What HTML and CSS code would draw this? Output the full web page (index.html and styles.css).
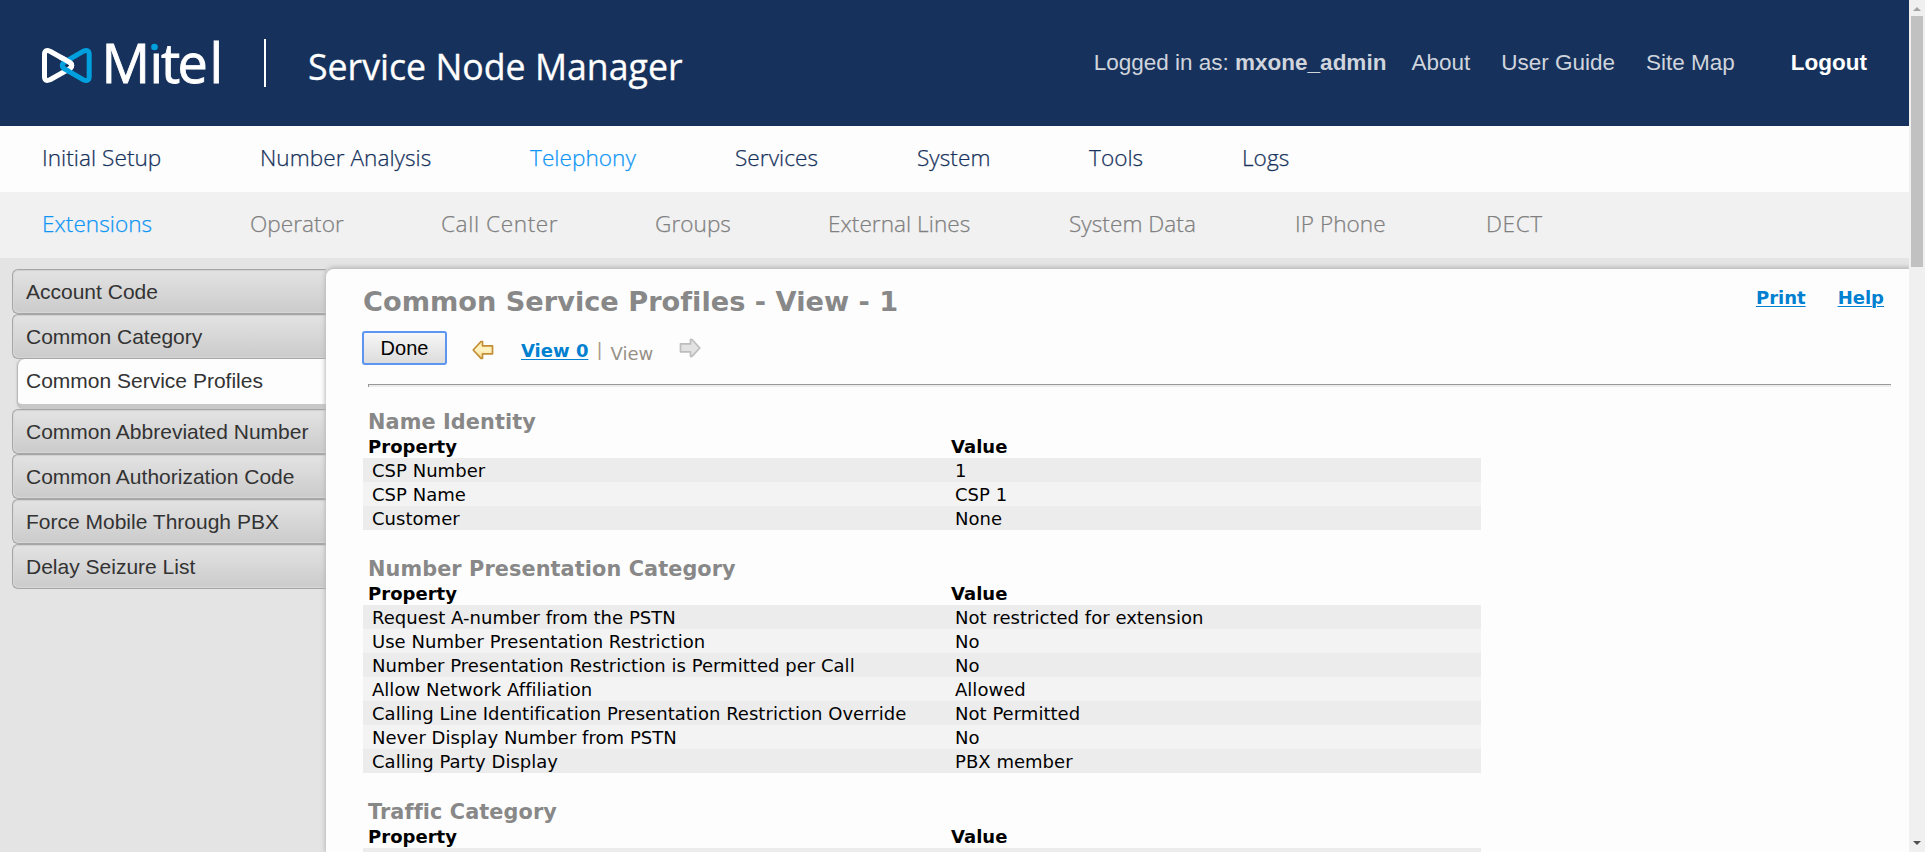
FILE: index.html
```html
<!DOCTYPE html>
<html lang="en">
<head>
<meta charset="utf-8">
<title>Service Node Manager</title>
<link rel="stylesheet" href="styles.css">
</head>
<body>
<div class="app">
  <div class="page">
    <header class="header">
      <svg class="logo" width="182" height="86" viewBox="0 -20 182 86" role="img" aria-label="Mitel">
        <g fill="none" stroke-width="5" stroke-linejoin="round">
          <path d="M2.500 14.500Q2.500 9 8 11.200L28 22.500Q31.500 25.500 28 28.500L8 39.800Q2.500 42 2.500 36.500Z" stroke="#fff"/>
          <path d="M47.200 14.500Q47.200 9 41.500 11.200L22 22.500Q18.500 25.500 22 28.500L41.500 39.800Q47.200 42 47.200 36.500Z" stroke="#00a0df"/>
          <path d="M18 16.900L28 22.500Q31.500 25.500 28 28.500" stroke="#fff"/>
        </g>
        <text class="logo-text" x="59.500 107.500 119 135.500 167.500" y="42.700">Mitel</text>
        <rect x="105" y="0" width="13" height="12" fill="#16325c"/>
        <circle cx="112.500" cy="7" r="3.300" fill="#00a0df"/>
      </svg>
      <span class="divider"></span>
      <h1 class="product">Service Node Manager</h1>
      <div class="account">
        <span class="user">Logged in as: <b>mxone_admin</b></span>
        <a>About</a><a>User Guide</a><a>Site Map</a><a class="logout">Logout</a>
      </div>
    </header>
    <nav class="nav main-nav">
      <a>Initial Setup</a><a>Number Analysis</a><a class="current">Telephony</a><a>Services</a><a>System</a><a>Tools</a><a>Logs</a>
    </nav>
    <nav class="nav sub-nav">
      <a class="current">Extensions</a><a>Operator</a><a class="wide">Call Center</a><a>Groups</a><a>External Lines</a><a>System Data</a><a>IP Phone</a><a class="wide">DECT</a>
    </nav>
    <div class="body">
      <aside class="side">
        <a class="tab">Account Code</a>
        <a class="tab">Common Category</a>
        <a class="tab active">Common Service Profiles</a>
        <a class="tab">Common Abbreviated Number</a>
        <a class="tab">Common Authorization Code</a>
        <a class="tab">Force Mobile Through PBX</a>
        <a class="tab">Delay Seizure List</a>
      </aside>
      <main class="panel">
        <div class="titlebar">
          <h2>Common Service Profiles - View - 1</h2>
          <div class="links"><a class="link">Print</a><a class="link">Help</a></div>
        </div>
        <div class="toolbar">
          <button class="done">Done</button>
          <svg class="prev" width="22" height="20" viewBox="0 0 22 20">
            <defs><linearGradient id="gold" x1="0" y1="0" x2="0" y2="1"><stop offset="0" stop-color="#ffe9a8"/><stop offset=".5" stop-color="#fff3c4"/><stop offset="1" stop-color="#fbd98a"/></linearGradient></defs>
            <path d="M1.200 10L9 1.500H10.500V5.800H20.500V13.800H10.500V18.300H9Z" fill="url(#gold)" stroke="#c18e35" stroke-width="1.700" stroke-linejoin="round"/>
          </svg>
          <a class="link view0">View 0</a>
          <span class="pipe">|</span>
          <span class="view">View</span>
          <svg class="next" width="22" height="20" viewBox="0 0 22 20">
            <path d="M20.800 10L13 1.500H11.500V5.800H1.500V13.800H11.500V18.300H13Z" fill="#e2e2e2" stroke="#bdbdbd" stroke-width="1.700" stroke-linejoin="round"/>
          </svg>
        </div>
        <div class="rule"></div>
        <section class="group">
          <h3>Name Identity</h3>
          <div class="row head"><span>Property</span><span>Value</span></div>
          <div class="row"><span>CSP Number</span><span>1</span></div>
          <div class="row"><span>CSP Name</span><span>CSP 1</span></div>
          <div class="row"><span>Customer</span><span>None</span></div>
        </section>
        <section class="group">
          <h3>Number Presentation Category</h3>
          <div class="row head"><span>Property</span><span>Value</span></div>
          <div class="row"><span>Request A-number from the PSTN</span><span>Not restricted for extension</span></div>
          <div class="row"><span>Use Number Presentation Restriction</span><span>No</span></div>
          <div class="row"><span>Number Presentation Restriction is Permitted per Call</span><span>No</span></div>
          <div class="row"><span>Allow Network Affiliation</span><span>Allowed</span></div>
          <div class="row"><span>Calling Line Identification Presentation Restriction Override</span><span>Not Permitted</span></div>
          <div class="row"><span>Never Display Number from PSTN</span><span>No</span></div>
          <div class="row"><span>Calling Party Display</span><span>PBX member</span></div>
        </section>
        <section class="group">
          <h3>Traffic Category</h3>
          <div class="row head"><span>Property</span><span>Value</span></div>
          <div class="row"></div>
        </section>
      </main>
    </div>
  </div>
  <div class="scrollbar">
    <svg width="16" height="16" viewBox="0 0 16 16"><path d="M4 11L8 7L12 11Z" fill="#a3a3a3"/></svg>
    <div class="thumb"></div>
    <svg class="down" width="16" height="16" viewBox="0 0 16 16"><path d="M4 5L8 9L12 5Z" fill="#505050"/></svg>
  </div>
</div>
</body>
</html>
```
FILE: styles.css
```css
* { box-sizing: border-box; }
body { margin: 0; background: #e4e4e4; overflow: hidden; }
.app { display: flex; height: 852px; overflow: hidden; }
.page { width: 1909px; height: 852px; display: flex; flex-direction: column; overflow: hidden; }

.header {
  flex: none; height: 126px; background: #16325c; display: flex; align-items: flex-start;
  padding-left: 42px; font-family: "Liberation Sans", Arial, sans-serif;
}
.logo { margin-top: 20px; flex: none; }
.logo-text { font-family: "Open Sans", sans-serif; font-size: 54px; font-weight: 400; fill: #fff; stroke: #fff; stroke-width: .8px; }
.divider { width: 2px; height: 48px; margin: 39px 0 0 40px; background: #fff; flex: none; }
.product {
  margin: 42px 0 0 42px; color: #fff; white-space: nowrap;
  font: 400 35.700px/48px "Open Sans", sans-serif; -webkit-text-stroke: .3px #fff;
}
.account { margin: 48px 42px 0 auto; display: flex; font-size: 22.500px; line-height: 30px; color: #d0d4dc; white-space: nowrap; }
.user { margin-right: 25px; }
.account a { margin-right: 31px; }
.account .logout { margin: 0 0 0 25px; color: #fff; font-weight: 700; }

.nav { flex: none; height: 66px; display: grid; padding-left: 42px; font: 300 22.600px/64px "Open Sans", sans-serif; letter-spacing: .04px; -webkit-text-stroke: .25px currentColor; white-space: nowrap; }
.main-nav { background: #fdfdfd; color: #16325c; grid-template-columns: 218px 270px 205px 182px 172px 153px 100px; }
.sub-nav { background: #f1f1f1; color: #808080; grid-template-columns: 208px 191px 214px 173px 241px 226px 191px 100px; }
.nav .current { color: #0f96f5; }
.nav .wide { letter-spacing: .6px; }

.body { flex: 1; display: flex; min-height: 0; padding-top: 11px; }
.side { width: 326px; flex: none; padding-left: 12px; font: 21px/43px "Liberation Sans", Arial, sans-serif; color: #333; }
.tab {
  display: block; height: 45px; padding-left: 13px; border: 1px solid #a6a6a6; border-right: 0; border-radius: 6px 0 0 6px;
  background: linear-gradient(#e3e3e3, #cbcbcb); box-shadow: inset 1px -1px 1px #d8d8d8, inset 0 1px 1px #d0d0d0; white-space: nowrap;
}
.tab.active {
  height: 50px; margin-left: 6px; padding-left: 8px; line-height: 43px; border: 0; border-bottom: 5px solid #c8c8c8;
  border-radius: 7px 0 0 7px; background: #fdfdfd; box-shadow: -1px 0 2px #aaa;
}

.panel {
  position: relative; flex: 1; min-width: 0; background: #fdfdfd; border-radius: 8px 0 0 0;
  box-shadow: 0 -1px 4px 1px #b8b8b8; padding-left: 36px;
  font-family: "DejaVu Sans", Verdana, sans-serif; font-size: 18px; color: #000; font-variant-ligatures: none;
}
.titlebar { display: flex; justify-content: space-between; height: 62px; padding-top: 17px; }
h2 { margin: 0; font-size: 27.200px; line-height: 32px; color: #888; padding-left: 1px; white-space: nowrap; }
.links { display: flex; gap: 32px; padding-right: 25px; line-height: 24px; }
.link { color: #0080d0; font-weight: 700; text-decoration: underline; text-decoration-thickness: 1px; text-underline-offset: 2px; }
.toolbar { display: flex; align-items: flex-start; height: 53px; }
.done {
  width: 85px; height: 34px; padding: 0; border: 2px solid #5c96f0; border-radius: 3px;
  background: linear-gradient(#f7f7f7, #dcdcdc); font: 20px/28px "Liberation Sans", Arial, sans-serif; color: #000;
}
.prev { margin: 9px 27px 0 25px; }
.view0 { margin-top: 8px; line-height: 24px; }
.pipe { margin: 7px 0 0 8px; line-height: 24px; color: #a79d8b; }
.view { margin: 11px 0 0 8px; line-height: 24px; color: #979086; }
.next { margin: 7px 0 0 26px; }
.rule { height: 3px; margin: 0 18px 0 6px; border-top: 1px solid #989898; border-left: 1px solid #989898; background: #ececec; }
.group { width: 1118px; margin-left: 1px; padding-top: 27px; }
.rule + .group { padding-top: 23px; }
h3 { margin: 0; padding-left: 5px; font-size: 20.800px; line-height: 24px; letter-spacing: .1px; color: #888; }
.row { display: grid; grid-template-columns: 583px 1fr; height: 24px; line-height: 26px; padding-left: 9px; letter-spacing: .03px; white-space: nowrap; }
.row:nth-child(odd) { background: #ececec; }
.row:nth-child(even) { background: #f3f3f3; }
.row.head { background: none; padding-left: 5px; font-weight: 700; }

.scrollbar { width: 16px; background: #f0f0f0; display: flex; flex-direction: column; align-items: center; }
.scrollbar svg { display: block; }
.thumb { width: 12px; height: 251px; background: #c1c1c1; }
.down { margin-top: auto; }
```
